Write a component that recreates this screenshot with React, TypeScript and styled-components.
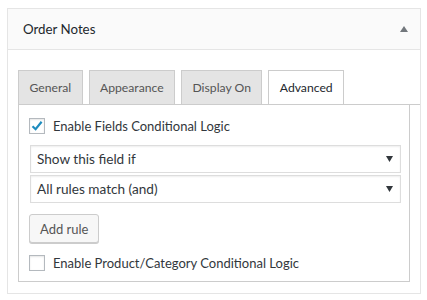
import React, { useState } from 'react'
import styled, { createGlobalStyle } from 'styled-components'

const GlobalStyle = createGlobalStyle`
    body {
        margin: 0;
        background: #fff;
        font-family: Lato, "Liberation Sans", sans-serif;
        font-size: 13px;
        color: #23282d;
    }
`

const TABS = ['General', 'Appearance', 'Display On', 'Advanced']

const CheckIcon = () => (
    <svg width="14" height="14" viewBox="0 0 14 14">
        <path d="M2.5 7.2 L5.6 10.2 L11.6 2.8" fill="none" stroke="#1e8cbe" strokeWidth="2.2" />
    </svg>
)

const Caret: React.FC<{ up?: boolean, color: string, w?: number }> = ({ up, color, w = 8 }) => (
    <svg width={w} height="6" viewBox={`0 0 ${w} 6`}>
        <path d={up ? `M0 6 L${w / 2} 0 L${w} 6 Z` : `M0 0 L${w} 0 L${w / 2} 6 Z`} fill={color} />
    </svg>
)

const Checkbox: React.FC<{ checked: boolean, label: string, onToggle: () => void }> = ({ checked, label, onToggle }) => (
    <CheckRow onClick={onToggle}>
        <CheckBoxSquare>{checked && <CheckIcon />}</CheckBoxSquare>
        <span>{label}</span>
    </CheckRow>
)

const App: React.FC = () => {
    const [active, setActive] = useState(3)
    const [fields, setFields] = useState(true)
    const [product, setProduct] = useState(false)

    return (
        <>
            <GlobalStyle />
            <Panel>
                <Header>
                    <Title>Order Notes</Title>
                    <Caret up color="#72777c" />
                </Header>

                <Body>
                    <TabBar>
                        {TABS.map((t, i) => (
                            <Tab key={t} $active={i === active} onClick={() => setActive(i)}>
                                {t}
                            </Tab>
                        ))}
                    </TabBar>

                    <TabContent>
                        <Checkbox
                            checked={fields}
                            label="Enable Fields Conditional Logic"
                            onToggle={() => setFields(!fields)}
                        />

                        <Selects>
                            <Select>
                                Show this field if
                                <Caret color="#32373c" w={7} />
                            </Select>
                            <Select>
                                All rules match (and)
                                <Caret color="#32373c" w={7} />
                            </Select>
                        </Selects>

                        <Button>Add rule</Button>

                        <Checkbox
                            checked={product}
                            label="Enable Product/Category Conditional Logic"
                            onToggle={() => setProduct(!product)}
                        />
                    </TabContent>
                </Body>
            </Panel>
        </>
    )
}

export default App

const Panel = styled.div`
    margin: 8px 7px 0;
    width: 414px;
    height: 286px;
    box-sizing: border-box;
    border: 1px solid #e5e5e5;
    display: flex;
    flex-direction: column;
`

const Header = styled.div`
    height: 40px;
    display: flex;
    align-items: center;
    justify-content: space-between;
    padding: 0 12px 0 15px;
    background: #fafafa;
    border-bottom: 1px solid #e5e5e5;
`

const Title = styled.h2`
    margin: 0;
    font-size: 13.3px;
    font-weight: 400;
    color: #23282d;
`

const Body = styled.div`
    padding: 20px 0 0 10px;
    display: flex;
    flex-direction: column;
`

const TabBar = styled.div`
    display: flex;
    gap: 6px;
    border-bottom: 1px solid #ccc;
`

const Tab = styled.div<{ $active: boolean }>`
    height: 33px;
    padding: 0 10.4px;
    display: flex;
    align-items: center;
    border: 1px solid #ccc;
    border-bottom: none;
    background: ${p => (p.$active ? '#fff' : '#e4e4e4')};
    color: ${p => (p.$active ? '#23282d' : '#555')};
    font-size: 12.2px;
    cursor: pointer;
`

const TabContent = styled.div`
    margin-right: 10px;
    border: 1px solid #ccc;
    border-top: none;
    padding: 13px 8px 10px 10px;
    display: flex;
    flex-direction: column;
    align-items: flex-start;
`

const CheckRow = styled.label`
    display: flex;
    align-items: center;
    gap: 8px;
    height: 16px;
    color: #32373c;
    cursor: pointer;
`

const CheckBoxSquare = styled.span`
    width: 16px;
    height: 16px;
    box-sizing: border-box;
    border: 1px solid #b4b9be;
    background: #fff;
    box-shadow: inset 0 1px 2px rgba(0, 0, 0, 0.1);
    display: flex;
    align-items: center;
    justify-content: center;
`

const Selects = styled.div`
    align-self: stretch;
    margin: 11px 0 11px 1px;
    display: flex;
    flex-direction: column;
    gap: 2px;
`

const Select = styled.div`
    height: 28px;
    box-sizing: border-box;
    padding: 0 7px 0 6px;
    display: flex;
    align-items: center;
    justify-content: space-between;
    border: 1px solid #ddd;
    box-shadow: inset 0 1px 2px rgba(0, 0, 0, 0.07);
    color: #32373c;
    font-size: 13.6px;
`

const Button = styled.button`
    height: 29px;
    padding: 0 10px;
    margin-bottom: 12px;
    border: 1px solid #ccc;
    border-radius: 3px;
    background: #f7f7f7;
    box-shadow: 0 1px 0 #ccc;
    font-family: inherit;
    font-size: 13px;
    color: #555;
    cursor: pointer;
`
